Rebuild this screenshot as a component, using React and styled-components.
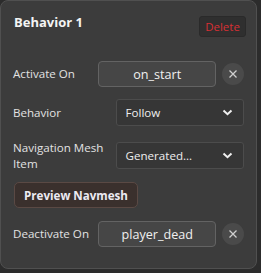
import React from 'react';
import styled, { createGlobalStyle } from 'styled-components';

const Global = createGlobalStyle`
  html, body { margin: 0; padding: 0; background: #2c2c2c; }
  body { font-family: "Open Sans", "Noto Sans", sans-serif; }
`;

const Panel = styled.div`
  width: 257px;
  height: 269px;
  box-sizing: border-box;
  background: #3c3c3c;
  border: 1px solid #505050;
  border-radius: 8px;
  padding: 14px 12px 0 12px;
  color: #e6e6e6;
`;

const Header = styled.div`
  display: flex;
  justify-content: space-between;
  align-items: flex-start;
  height: 36px;
`;

const Title = styled.div`
  font-size: 13px;
  font-weight: 700;
  color: #f4f4f4;
  line-height: 14px;
  margin-left: 1px;
`;

const DeleteButton = styled.button`
  margin-top: 1px;
  margin-right: -2px;
  width: 47px;
  height: 21px;
  padding: 0;
  background: #2f2f2f;
  border: 1px solid #2a2a2a;
  border-radius: 3px;
  color: #d83034;
  font-family: inherit;
  font-size: 11.5px;
`;

const Row = styled.div`
  display: flex;
  align-items: center;
  height: ${p => p.h || 26}px;
  margin-top: ${p => p.mt || 0}px;
`;

const Label = styled.div`
  width: ${p => p.w || 86}px;
  font-size: 11.6px;
  line-height: 16px;
  color: #e2e2e2;
`;

const EventField = styled.div`
  width: 119px;
  height: 26px;
  box-sizing: border-box;
  background: #464646;
  border: 1px solid #636363;
  border-radius: 4px;
  display: flex;
  align-items: center;
  justify-content: center;
  font-size: 12.6px;
  color: #f0f0f0;
`;

const ClearButton = styled.div`
  width: 22px;
  height: 22px;
  margin-left: 6px;
  border-radius: 50%;
  background: #4a4a4a;
  display: flex;
  align-items: center;
  justify-content: center;
`;

const Select = styled.div`
  width: 130px;
  height: 27px;
  box-sizing: border-box;
  background: #363636;
  border: 1px solid #4c4c4c;
  border-radius: 3px;
  display: flex;
  align-items: center;
  justify-content: space-between;
  padding: 0 10px 0 9px;
  font-size: 11.6px;
  color: #eeeeee;
`;

const PreviewButton = styled.button`
  width: 124px;
  height: 26px;
  padding: 0;
  margin-left: 1px;
  background: #3a302d;
  border: 1px solid #5a4944;
  border-radius: 5px;
  color: #eceaf2;
  font-family: inherit;
  font-size: 11.6px;
  font-weight: 700;
`;

const Cross = () => (
  <svg width="10" height="10" viewBox="0 0 10 10">
    <path d="M1.5 1.5 L8.5 8.5 M8.5 1.5 L1.5 8.5" stroke="#cfcfcf" strokeWidth="1.3" />
  </svg>
);

const Chevron = () => (
  <svg width="11" height="7" viewBox="0 0 11 7">
    <path d="M1.5 1.5 L5.5 5.2 L9.5 1.5" stroke="#f0f0f0" strokeWidth="2" fill="none" />
  </svg>
);

export default function App() {
  return (
    <>
      <Global />
      <Panel>
        <Header>
          <Title>Behavior 1</Title>
          <DeleteButton>Delete</DeleteButton>
        </Header>
        <Row mt={10}>
          <Label>Activate On</Label>
          <EventField>on_start</EventField>
          <ClearButton><Cross /></ClearButton>
        </Row>
        <Row mt={12} h={27}>
          <Label w={104}>Behavior</Label>
          <Select>Follow<Chevron /></Select>
        </Row>
        <Row mt={16} h={27}>
          <Label w={104}>Navigation Mesh Item</Label>
          <Select>Generated...<Chevron /></Select>
        </Row>
        <Row mt={13}>
          <PreviewButton>Preview Navmesh</PreviewButton>
        </Row>
        <Row mt={13}>
          <Label>Deactivate On</Label>
          <EventField>player_dead</EventField>
          <ClearButton><Cross /></ClearButton>
        </Row>
      </Panel>
    </>
  );
}
